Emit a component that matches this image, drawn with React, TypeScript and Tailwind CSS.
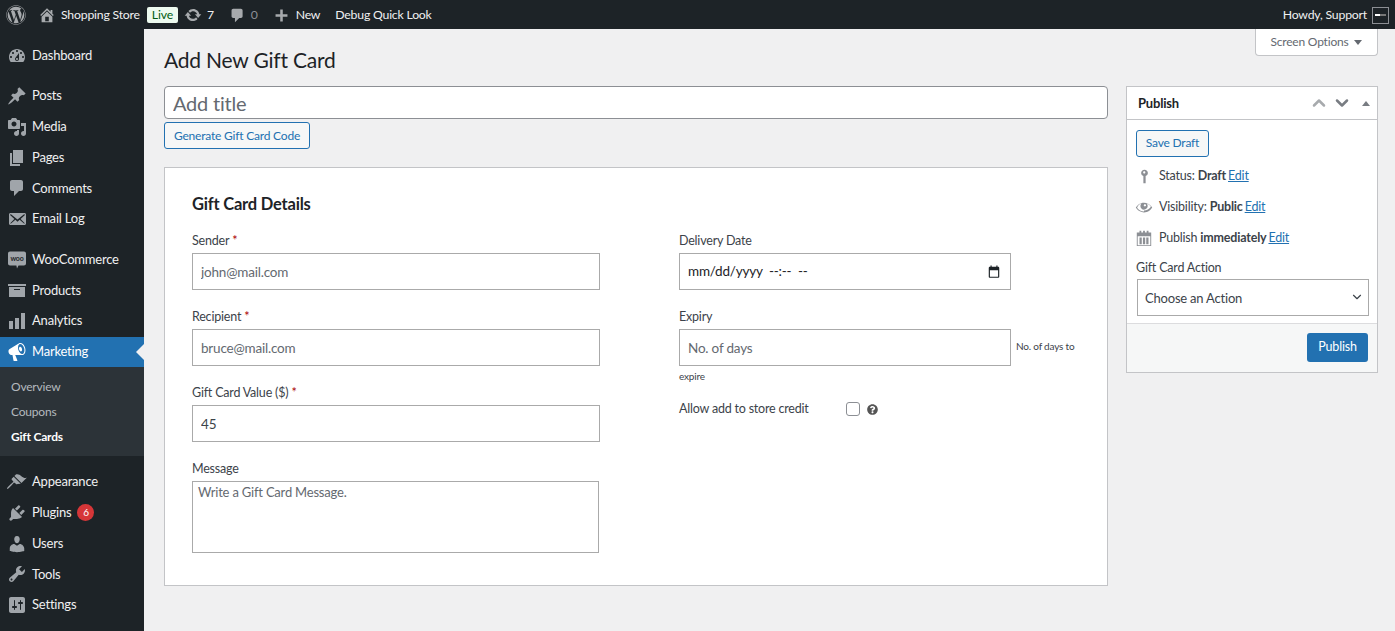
import { ChevronDown, ChevronUp } from "lucide-react"
import { FaWordpress, FaQuestionCircle } from "react-icons/fa"

const paths = {
  dashboard:
    "M3.76 16h12.48c1.1-1.37 1.76-3.11 1.76-5 0-4.42-3.58-8-8-8s-8 3.58-8 8c0 1.89.66 3.63 1.76 5zM10 4c.55 0 1 .45 1 1s-.45 1-1 1-1-.45-1-1 .45-1 1-1zM6 6c.55 0 1 .45 1 1s-.45 1-1 1-1-.45-1-1 .45-1 1-1zm8 0c.55 0 1 .45 1 1s-.45 1-1 1-1-.45-1-1 .45-1 1-1zm-5.37 5.55L12 7v6c0 1.1-.9 2-2 2s-2-.9-2-2c0-.57.24-1.08.63-1.45zM4 10c.55 0 1 .45 1 1s-.45 1-1 1-1-.45-1-1 .45-1 1-1zm12 0c.55 0 1 .45 1 1s-.45 1-1 1-1-.45-1-1 .45-1 1-1zm-5 3c0-.55-.45-1-1-1s-1 .45-1 1 .45 1 1 1 1-.45 1-1z",
  post: "M10.44 3.02l1.82-1.82 6.36 6.35-1.83 1.82c-1.05-.68-2.48-.57-3.41.36l-.75.75c-.92.93-1.04 2.35-.35 3.41l-1.83 1.82-2.41-2.41-2.8 2.79c-.42.42-3.38 2.71-3.8 2.29s1.86-3.39 2.28-3.81l2.79-2.79L4.1 9.36l1.83-1.82c1.05.69 2.48.57 3.4-.36l.75-.75c.93-.92 1.05-2.35.36-3.41z",
  media:
    "M13 11V4c0-.55-.45-1-1-1h-1.67L9 1H5L3.67 3H2c-.55 0-1 .45-1 1v7c0 .55.45 1 1 1h10c.55 0 1-.45 1-1zM7 4.5c1.38 0 2.5 1.12 2.5 2.5S8.38 9.5 7 9.5 4.5 8.38 4.5 7 5.62 4.5 7 4.5zM14 6h5v10.5c0 1.38-1.12 2.5-2.5 2.5S14 17.88 14 16.5s1.12-2.5 2.5-2.5c.17 0 .34.02.5.05V9h-3V6zm-4 8.05V13h2v3.5c0 1.38-1.12 2.5-2.5 2.5S7 17.88 7 16.5 8.12 14 9.5 14c.17 0 .34.02.5.05z",
  page: "M6 15V2h10v13H6zm-1 1h8v2H3V5h2v11z",
  comment:
    "M5 2h9c1.1 0 2 .9 2 2v7c0 1.1-.9 2-2 2h-2l-5 5v-5H5c-1.1 0-2-.9-2-2V4c0-1.1.9-2 2-2z",
  email:
    "M19 14.5v-9c0-.83-.67-1.5-1.5-1.5H3.49c-.83 0-1.5.67-1.5 1.5v9c0 .83.67 1.5 1.5 1.5H17.5c.83 0 1.5-.67 1.5-1.5zm-1.31-9.11c.33.33.15.67-.03.84L13.6 9.95l3.9 4.06c.12.14.2.36.06.51-.13.16-.43.15-.56.05l-4.37-3.73-2.14 1.95-2.13-1.95-4.37 3.73c-.13.1-.43.11-.56-.05-.14-.15-.06-.37.06-.51l3.9-4.06-4.06-3.72c-.18-.17-.36-.51-.03-.84s.67-.17.95.07l6.24 5.04 6.25-5.04c.28-.24.62-.4.95-.07z",
  archive: "M19 4v2H1V4h18zM2 7h16v10H2V7zm11 3V9H7v1h6z",
  chart: "M18 18V2h-4v16h4zm-6 0V7H8v11h4zm-6 0v-8H2v8h4z",
  megaphone:
    "M18.15 5.94c.46 1.62.38 3.22-.02 4.48-.42 1.28-1.26 2.18-2.3 2.48-.16.06-.26.06-.4.06-.06.02-.12.02-.18.02-.06.02-.14.02-.22.02h-6.8l2.22 5.5c.02.14-.06.26-.14.34-.08.1-.24.16-.34.16H6.95c-.1 0-.26-.06-.34-.16-.08-.08-.16-.2-.14-.34l-1-5.5H4.25l-.02-.02c-.5.06-1.08-.18-1.54-.62s-.88-1.08-1.06-1.88c-.24-.8-.2-1.56-.02-2.2.18-.62.58-1.08 1.06-1.3l.02-.02 9-5.4c.1-.06.18-.1.24-.16.06-.04.14-.08.24-.12.16-.08.28-.12.5-.18 1.04-.3 2.24.1 3.22.98s1.84 2.24 2.26 3.86zm-2.58 5.98h-.02c.4-.1.74-.34 1.04-.7.58-.7.86-1.76.86-3.04-.02-.64-.1-1.3-.28-1.98-.34-1.36-1.02-2.5-1.78-3.24s-1.68-1.1-2.46-.88c-.82.22-1.4.96-1.7 2-.32 1.04-.28 2.36.06 3.72.38 1.36 1 2.5 1.8 3.24.78.74 1.62 1.1 2.48.88zm-2.54-7.08c.22-.04.42-.02.62.04.38.16.76.48 1.02 1s.42 1.2.42 1.78c0 .3-.04.56-.12.8-.18.48-.44.84-.86.94-.34.1-.8-.06-1.14-.4-.34-.34-.66-.9-.84-1.48-.16-.6-.18-1.22-.02-1.7.14-.48.44-.88.92-.98z",
  appearance:
    "M14.48 11.06L7.41 3.99l1.5-1.5c.5-.56 2.3-.47 3.51.32 1.21.8 1.43 1.28 2.91 2.1 1.18.64 2.45 1.26 4.45.85zm-.71.71L6.7 4.7 4.93 6.47c-.39.39-.39 1.02 0 1.41l1.06 1.06c.39.39.39 1.03 0 1.42-.6.6-6.76 5.66-5.93 6.49.83.83 5.89-5.33 6.49-5.93.39-.39 1.03-.39 1.42 0l1.06 1.06c.39.39 1.02.39 1.41 0z",
  plugin:
    "M13.11 4.36L9.87 7.6 8 5.73l3.24-3.24c.35-.34 1.05-.2 1.56.32.52.51.66 1.21.31 1.55zm-8 1.77l.91-1.12 9.01 9.01-1.19.84c-.71.71-2.63 1.16-3.82 1.16H6.14L4.9 17.26c-.59.59-1.54.59-2.12 0-.59-.58-.59-1.53 0-2.12l1.24-1.24v-3.88c0-1.13.4-3.19 1.09-3.89zm7.26 3.97l3.24-3.24c.34-.35 1.04-.21 1.55.31.52.51.66 1.21.31 1.55l-3.24 3.25z",
  users:
    "M10 9.25c-2.27 0-2.73-3.44-2.73-3.44C7 4.02 7.82 2 9.97 2c2.16 0 2.98 2.02 2.71 3.81 0 0-.41 3.44-2.68 3.44zm0 2.57L12.72 10c2.39 0 4.52 2.33 4.52 4.53v2.49s-3.65 1.13-7.24 1.13c-3.65 0-7.24-1.13-7.24-1.13v-2.49c0-2.25 1.94-4.48 4.47-4.48z",
  tools:
    "M16.68 9.77c-1.34 1.34-3.3 1.67-4.95.99l-5.41 6.52c-.99.99-2.59.99-3.58 0s-.99-2.59 0-3.57l6.52-5.42c-.68-1.65-.35-3.61.99-4.95 1.28-1.28 3.12-1.62 4.72-1.06l-2.89 2.89 2.82 2.82 2.86-2.87c.53 1.58.18 3.39-1.08 4.65zM3.81 16.21c.4.39 1.04.39 1.43 0 .4-.4.4-1.04 0-1.43-.39-.4-1.03-.4-1.43 0-.39.39-.39 1.03 0 1.43z",
  settings:
    "M18 16V4c0-1.1-.9-2-2-2H4c-1.1 0-2 .9-2 2v12c0 1.1.9 2 2 2h12c1.1 0 2-.9 2-2zM8 11h1c.55 0 1 .45 1 1s-.45 1-1 1H8v1.5c0 .28-.22.5-.5.5s-.5-.22-.5-.5V13H6c-.55 0-1-.45-1-1s.45-1 1-1h1V5.5c0-.28.22-.5.5-.5s.5.22.5.5V11zm5-2h-1c-.55 0-1-.45-1-1s.45-1 1-1h1V5.5c0-.28.22-.5.5-.5s.5.22.5.5V7h1c.55 0 1 .45 1 1s-.45 1-1 1h-1v5.5c0 .28-.22.5-.5.5s-.5-.22-.5-.5V9z",
  home: "M16 8.5l1.53 1.53-1.06 1.06L10 4.62l-6.47 6.47-1.06-1.06L10 2.5l4 4v-2h2v4zm-6-2.46l6 5.99V18H4v-5.97zM12 17v-5H8v5h4z",
  update:
    "M10.2 3.28c3.53 0 6.43 2.61 6.92 6h2.08l-3.5 4-3.5-4h2.32c-.45-1.97-2.21-3.45-4.32-3.45-1.45 0-2.73.71-3.54 1.78L4.95 5.66C6.23 4.2 8.11 3.28 10.2 3.28zm-.4 13.44c-3.52 0-6.43-2.61-6.92-6H.8l3.5-4c1.17 1.33 2.33 2.67 3.5 4H5.48c.45 1.97 2.21 3.45 4.32 3.45 1.45 0 2.73-.71 3.54-1.78l1.71 1.95c-1.28 1.46-3.15 2.38-5.25 2.38z",
  plus: "M17 8.5v3h-5.5V17h-3v-5.5H3v-3h5.5V3h3v5.5z",
  pin: "M10 1c2.6 0 4.500 1.800 4.500 4.200 0 1.900-1.300 3.500-3 4V19h-3V9.200c-1.700-.5-3-2.100-3-4C5.500 2.800 7.400 1 10 1zM9.700 3.100c-.9 0-1.500.6-1.500 1.400s.6 1.400 1.500 1.400 1.400-.6 1.400-1.400-.5-1.400-1.400-1.400z",
  eye: "M18.3 9.5C15 4.9 8.5 3.8 3.9 7.2c-1.2.9-2.2 2.1-3 3.4.2.4.5.8.8 1.2 3.3 4.6 9.6 5.6 14.2 2.4.9-.7 1.7-1.4 2.4-2.4.3-.4.5-.8.8-1.2-.3-.4-.5-.8-.8-1.1zm-8.2-2.3c.5-.5 1.3-.5 1.8 0s.5 1.3 0 1.8-1.3.5-1.8 0c-.5-.4-.5-1.3 0-1.8zm-.1 7.7c-3.1 0-6-1.6-7.7-4.2C3.5 8 5.1 6.8 7 6.2c-.7.8-1 1.7-1 2.7 0 2.2 1.7 4.1 4 4.1 2.2 0 4.1-1.7 4.1-4v-.1c0-1-.4-2-1.1-2.7 1.9.6 3.5 1.8 4.7 3.500-1.7 2.6-4.6 4.2-7.7 4.200z",
  calendar:
    "M15 4h3v15H2V4h3V2h2v2h2V2h2v2h2V2h2v2zM3 8v10h14V8H3zm2 1.500h2.500V17H5V9.500zm3.800 0h2.500V17H8.800V9.500zm3.700 0H15V17h-2.500V9.500z",
}

type IconName = keyof typeof paths

function Dash({ name, size = 20, className = "" }: { name: IconName; size?: number; className?: string }) {
  return (
    <svg viewBox="0 0 20 20" width={size} height={size} fill="currentColor" fillRule="evenodd" className={`shrink-0 ${className}`}>
      <path d={paths[name]} />
    </svg>
  )
}

function WooIcon() {
  return (
    <svg viewBox="0 0 20 20" width={20} height={20}>
      <path d="M3 1.500h14c1.100 0 2 .9 2 2v10c0 1.100-.9 2-2 2h-5.500l-1.500 3-.6-3H3c-1.100 0-2-.9-2-2v-10c0-1.100.9-2 2-2z" fill="currentColor" />
      <text x="10" y="11" fontSize="7" fontWeight="700" textAnchor="middle" fill="#1d2327">woo</text>
    </svg>
  )
}

function MenuItem({ icon, label, active, badge }: { icon: IconName | "woo"; label: string; active?: boolean; badge?: string }) {
  return (
    <div className={`relative flex h-[30.75px] items-center ${active ? "bg-[#2271b1] text-white" : "text-[#f0f0f1]"}`}>
      <span className={`flex w-[32px] shrink-0 justify-center pl-[1px] ${active ? "text-white" : "text-[#a0a5aa]"}`}>
        {icon === "woo" ? <WooIcon /> : <Dash name={icon} size={20} />}
      </span>
      <span>{label}</span>
      {badge && (
        <span className="ml-[6px] flex h-[17px] w-[17px] items-center justify-center rounded-full bg-[#d63638] text-[10px] text-white">
          {badge}
        </span>
      )}
      {active && (
        <span className="absolute right-0 top-1/2 -mt-[8px] h-0 w-0 border-y-[8px] border-r-[8px] border-y-transparent border-r-[#f0f0f1]" />
      )}
    </div>
  )
}

function Sidebar() {
  return (
    <aside className="w-[144px] shrink-0 bg-[#1d2327] pt-[11.5px] text-[13px]">
      <MenuItem icon="dashboard" label="Dashboard" />
      <div className="h-[9.5px]" />
      <MenuItem icon="post" label="Posts" />
      <MenuItem icon="media" label="Media" />
      <MenuItem icon="page" label="Pages" />
      <MenuItem icon="comment" label="Comments" />
      <MenuItem icon="email" label="Email Log" />
      <div className="h-[9.75px]" />
      <MenuItem icon="woo" label="WooCommerce" />
      <MenuItem icon="archive" label="Products" />
      <MenuItem icon="chart" label="Analytics" />
      <MenuItem icon="megaphone" label="Marketing" active />
      <div className="bg-[#2c3338] pb-[6.75px] pl-[11px] pt-[7px] text-[12px] text-[#b4b9be]">
        <div className="flex h-[25px] items-center">Overview</div>
        <div className="flex h-[25px] items-center">Coupons</div>
        <div className="flex h-[25px] items-center font-bold text-white">Gift Cards</div>
      </div>
      <div className="h-[10.75px]" />
      <MenuItem icon="appearance" label="Appearance" />
      <MenuItem icon="plugin" label="Plugins" badge="6" />
      <MenuItem icon="users" label="Users" />
      <MenuItem icon="tools" label="Tools" />
      <MenuItem icon="settings" label="Settings" />
    </aside>
  )
}

function AdminBar() {
  return (
    <header className="flex h-[29px] shrink-0 items-center bg-[#1d2327] pt-[1px] text-[12.25px] text-[#f0f0f1]">
      <FaWordpress size={20} className="ml-[6px] text-[#a7aaad]" />
      <Dash name="home" size={18} className="ml-[12px] text-[#a7aaad]" />
      <span className="ml-[5px]">Shopping Store</span>
      <span className="ml-[7px] flex h-[16px] w-[31px] items-center justify-center rounded-[2px] bg-[#edfaef] text-[#005c12]">
        Live
      </span>
      <Dash name="update" size={18} className="ml-[6px] text-[#a7aaad]" />
      <span className="ml-[5px]">7</span>
      <Dash name="comment" size={17} className="ml-[15px] text-[#a7aaad]" />
      <span className="ml-[5px] text-[#8c8f94]">0</span>
      <Dash name="plus" size={17} className="ml-[15px] text-[#a7aaad]" />
      <span className="ml-[6px]">New</span>
      <span className="ml-[15px]">Debug Quick Look</span>
      <span className="ml-auto">Howdy, Support</span>
      <span className="ml-[5px] mr-[6px] flex h-[17px] w-[17px] items-center justify-center border border-[#8c8f94] bg-[#1d2327]">
        <span className="h-[2px] w-[11px] bg-[linear-gradient(to_right,#ffffff_45%,#777777_45%)]" />
      </span>
    </header>
  )
}

const fieldClass =
  "h-[37px] w-full border border-[#aaaaaa] bg-white px-[8px] text-[13.5px] text-[#3c434a] outline-none placeholder:text-[#646970]"

function Field({ label, required, children }: { label: string; required?: boolean; children: React.ReactNode }) {
  return (
    <div className="mb-[15px]">
      <label className="flex h-[24px] items-center text-[12.5px] text-[#3c434a]">
        {label}
        {required && <span className="ml-[3px] text-[#a00]">*</span>}
      </label>
      {children}
    </div>
  )
}

function DetailsPanel() {
  return (
    <section className="mt-[18px] h-[419px] border border-[#c3c4c7] bg-white pl-[27px] pt-[26px]">
      <h2 className="flex h-[21px] items-center text-[16.5px] font-bold text-[#1d2327]">Gift Card Details</h2>
      <div className="mt-[14px] flex">
        <div className="w-[487px] shrink-0">
          <div className="w-[408px]">
            <Field label="Sender" required>
              <input className={fieldClass} placeholder="john@mail.com" />
            </Field>
            <Field label="Recipient" required>
              <input className={fieldClass} placeholder="bruce@mail.com" />
            </Field>
            <Field label="Gift Card Value ($)" required>
              <input className={fieldClass} defaultValue="45" />
            </Field>
            <Field label="Message">
              <textarea
                className="block h-[72px] w-[407px] resize-none border border-[#aaaaaa] bg-white px-[5px] py-[1px] text-[13px] text-[#646970] outline-none placeholder:text-[#646970]"
                placeholder="Write a Gift Card Message."
              />
            </Field>
          </div>
        </div>
        <div className="w-[401px]">
          <Field label="Delivery Date">
            <div className="flex h-[37px] w-[332px] items-center justify-between border border-[#aaaaaa] bg-white pl-[8px] pr-[9px] text-[13.5px] text-[#1d2327]">
              <span className="whitespace-pre">mm/dd/yyyy  --:--  --</span>
              <svg viewBox="0 0 24 24" width={14} height={14} fill="currentColor">
                <path d="M19 3h-1V1h-2v2H8V1H6v2H5c-1.100 0-2 .9-2 2v15c0 1.100.9 2 2 2h14c1.100 0 2-.9 2-2V5c0-1.100-.9-2-2-2zm0 17H5V9h14v11z" />
              </svg>
            </div>
          </Field>
          <Field label="Expiry">
            <div className="text-[10px] leading-[20px] text-[#3c434a]">
              <input className={`${fieldClass} !w-[332px] align-middle`} placeholder="No. of days" />
              <span className="ml-[5px]">No. of days to expire</span>
            </div>
          </Field>
          <div className="mt-[-2px] flex h-[20px] items-center text-[12.5px] text-[#3c434a]">
            <span className="w-[167px]">Allow add to store credit</span>
            <input type="checkbox" className="h-[14px] w-[14px] appearance-none rounded-[3px] border border-[#8c8f94] bg-white" />
            <FaQuestionCircle size={11} className="ml-[7px] text-[#555555]" />
          </div>
        </div>
      </div>
    </section>
  )
}

function PublishRow({ icon, size = 18, children }: { icon: IconName; size?: number; children: React.ReactNode }) {
  return (
    <div className="flex h-[31px] items-center text-[12.5px] text-[#3c434a]">
      <span className="flex w-[16px] justify-center text-[#8c8f94]">
        <Dash name={icon} size={size} />
      </span>
      <span className="ml-[7px]">{children}</span>
    </div>
  )
}

function EditLink() {
  return <a className="ml-[2px] cursor-pointer text-[#2271b1] underline">Edit</a>
}

function PublishBox() {
  return (
    <aside className="w-[252px] shrink-0 self-start border border-[#c3c4c7] bg-white">
      <div className="flex h-[33px] items-center border-b border-[#c3c4c7] pl-[11px] pr-[5px]">
        <span className="pt-[1px] text-[13px] font-bold text-[#1d2327]">Publish</span>
        <ChevronUp size={20} strokeWidth={3} className="ml-auto text-[#a7aaad]" />
        <ChevronDown size={20} strokeWidth={3} className="ml-[3px] text-[#787c82]" />
        <span className="ml-[10px] mr-[2px] h-0 w-0 border-x-[4px] border-b-[5px] border-x-transparent border-b-[#787c82]" />
      </div>
      <div className="px-[9px] pt-[9px]">
        <button className="h-[27px] w-[73px] rounded-[3px] border border-[#2271b1] bg-[#f6f7f7] text-[12px] text-[#2271b1]">
          Save Draft
        </button>
        <div className="mt-[4px]">
          <PublishRow icon="pin" size={15}>
            Status: <b className="font-bold">Draft</b>
            <EditLink />
          </PublishRow>
          <PublishRow icon="eye">
            Visibility: <b className="font-bold">Public</b>
            <EditLink />
          </PublishRow>
          <PublishRow icon="calendar">
            Publish <b className="font-bold">immediately</b>
            <EditLink />
          </PublishRow>
        </div>
        <div className="mt-[5px] flex h-[20px] items-center text-[12.5px] text-[#3c434a]">Gift Card Action</div>
        <div className="relative ml-[1px] w-[232px]">
          <select className="block h-[37px] w-full appearance-none border border-[#aaaaaa] bg-white px-[7px] pt-[4px] text-[13px] text-[#3c434a] outline-none">
            <option>Choose an Action</option>
          </select>
          <ChevronDown size={14} className="pointer-events-none absolute right-[5px] top-[11px] text-[#3c434a]" />
        </div>
      </div>
      <div className="mt-[7px] flex h-[49px] items-start justify-end border-t border-[#dcdcde] bg-[#f6f7f7] pr-[9px] pt-[9px]">
        <button className="h-[29px] w-[61px] rounded-[3px] bg-[#2271b1] text-[12.5px] text-white">Publish</button>
      </div>
    </aside>
  )
}

export default function App() {
  return (
    <div className="flex h-[631px] flex-col overflow-hidden bg-[#f0f0f1] font-['Lato',sans-serif] tracking-[-0.2px]">
      <AdminBar />
      <div className="flex min-h-0 flex-1">
        <Sidebar />
        <main className="min-w-0 flex-1 pl-[20px] pr-[17px]">
          <div className="flex h-[57px] items-start justify-between">
            <h1 className="mt-[15px] flex h-[30px] items-center text-[21px] font-normal leading-none text-[#1d2327]">Add New Gift Card</h1>
            <div className="flex h-[27px] w-[123px] items-center justify-center gap-[6px] rounded-b-[4px] border border-t-0 border-[#c3c4c7] bg-white text-[12px] text-[#646970]">
              Screen Options
              <span className="h-0 w-0 border-x-[4px] border-t-[5px] border-x-transparent border-t-[#646970]" />
            </div>
          </div>
          <div className="flex gap-[18px]">
            <div className="w-[944px] shrink-0">
              <input
                className="block h-[33px] w-full rounded-[4px] border border-[#8c8f94] bg-white px-[8px] text-[20px] text-[#3c434a] outline-none placeholder:text-[#646970]"
                placeholder="Add title"
              />
              <button className="mt-[3px] block h-[27px] w-[146px] rounded-[3px] border border-[#2271b1] bg-[#f6f7f7] text-[12px] text-[#2271b1]">
                Generate Gift Card Code
              </button>
              <DetailsPanel />
            </div>
            <PublishBox />
          </div>
        </main>
      </div>
    </div>
  )
}
